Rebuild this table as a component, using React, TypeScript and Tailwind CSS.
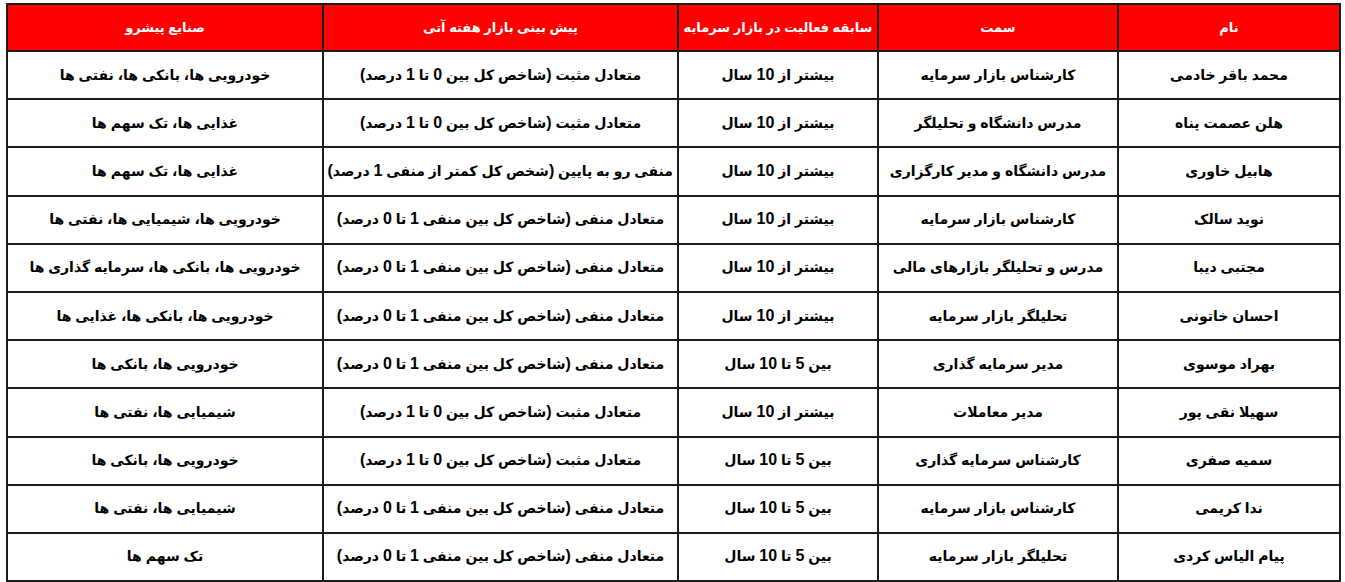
import React from 'react';

const headers = ['نام', 'سمت', 'سابقه فعالیت در بازار سرمایه', 'پیش بینی بازار هفته آتی', 'صنایع پیشرو'];

const rows: string[][] = [
  ['محمد باقر خادمی', 'کارشناس بازار سرمایه', 'بیشتر از 10 سال', 'متعادل مثبت (شاخص کل بین 0 تا 1 درصد)', 'خودرویی ها، بانکی ها، نفتی ها'],
  ['هلن عصمت پناه', 'مدرس دانشگاه و تحلیلگر', 'بیشتر از 10 سال', 'متعادل مثبت (شاخص کل بین 0 تا 1 درصد)', 'غذایی ها، تک سهم ها'],
  ['هابیل خاوری', 'مدرس دانشگاه و مدیر کارگزاری', 'بیشتر از 10 سال', 'منفی رو به پایین (شخص کل کمتر از منفی 1 درصد)', 'غذایی ها، تک سهم ها'],
  ['نوید سالک', 'کارشناس بازار سرمایه', 'بیشتر از 10 سال', 'متعادل منفی (شاخص کل بین  منفی 1 تا 0 درصد)', 'خودرویی ها، شیمیایی ها، نفتی ها'],
  ['مجتبی دیبا', 'مدرس و تحلیلگر بازارهای مالی', 'بیشتر از 10 سال', 'متعادل منفی (شاخص کل بین  منفی 1 تا 0 درصد)', 'خودرویی ها، بانکی ها، سرمایه گذاری ها'],
  ['احسان خاتونی', 'تحلیلگر بازار سرمایه', 'بیشتر از 10 سال', 'متعادل منفی (شاخص کل بین  منفی 1 تا 0 درصد)', 'خودرویی ها، بانکی ها، غذایی ها'],
  ['بهراد موسوی', 'مدیر سرمایه گذاری', 'بین 5 تا 10 سال', 'متعادل منفی (شاخص کل بین  منفی 1 تا 0 درصد)', 'خودرویی ها، بانکی ها'],
  ['سهیلا نقی پور', 'مدیر معاملات', 'بیشتر از 10 سال', 'متعادل مثبت (شاخص کل بین 0 تا 1 درصد)', 'شیمیایی ها، نفتی ها'],
  ['سمیه صفری', 'کارشناس سرمایه گذاری', 'بین 5 تا 10 سال', 'متعادل مثبت (شاخص کل بین 0 تا 1 درصد)', 'خودرویی ها، بانکی ها'],
  ['ندا کریمی', 'کارشناس بازار سرمایه', 'بین 5 تا 10 سال', 'متعادل منفی (شاخص کل بین منفی 1 تا 0 درصد)', 'شیمیایی ها، نفتی ها'],
  ['پیام الیاس کردی', 'تحلیلگر بازار سرمایه', 'بین 5 تا 10 سال', 'متعادل منفی (شاخص کل بین منفی 1 تا 0 درصد)', 'تک سهم ها'],
];

// digits and brackets come out larger than the Persian letters in the sheet
const renderCell = (text: string) =>
  text.split(/([0-9()]+)/).map((part, k) =>
    /[0-9()]/.test(part) ? (
      <span key={k} className="text-[16px] leading-none">
        {part}
      </span>
    ) : (
      part
    )
  );

const App = () => {
  return (
    <div className="w-[1345px] h-[582px] bg-white overflow-hidden pt-[3px] pl-[6px]">
      <table
        dir="rtl"
        className="w-[1333px] table-fixed border-collapse font-['Liberation_Sans','DejaVu_Sans',sans-serif] font-bold"
      >
        <colgroup>
          <col className="w-[222px]" />
          <col className="w-[240px]" />
          <col className="w-[200px]" />
          <col className="w-[355px]" />
          <col className="w-[316px]" />
        </colgroup>
        <thead>
          <tr className="h-[47px] bg-[#ff0000]">
            {headers.map((h) => (
              <th
                key={h}
                className="border-2 border-[#1c1c1c] text-white text-[13px] font-bold text-center whitespace-nowrap px-1"
              >
                {h}
              </th>
            ))}
          </tr>
        </thead>
        <tbody>
          {rows.map((r, i) => (
            <tr key={i} className="h-[48.2px]">
              {r.map((c, j) => (
                <td
                  key={j}
                  className="border-2 border-[#1c1c1c] text-black text-[14px] text-center whitespace-nowrap px-1"
                >
                  {renderCell(c)}
                </td>
              ))}
            </tr>
          ))}
        </tbody>
      </table>
    </div>
  );
};

export default App;
